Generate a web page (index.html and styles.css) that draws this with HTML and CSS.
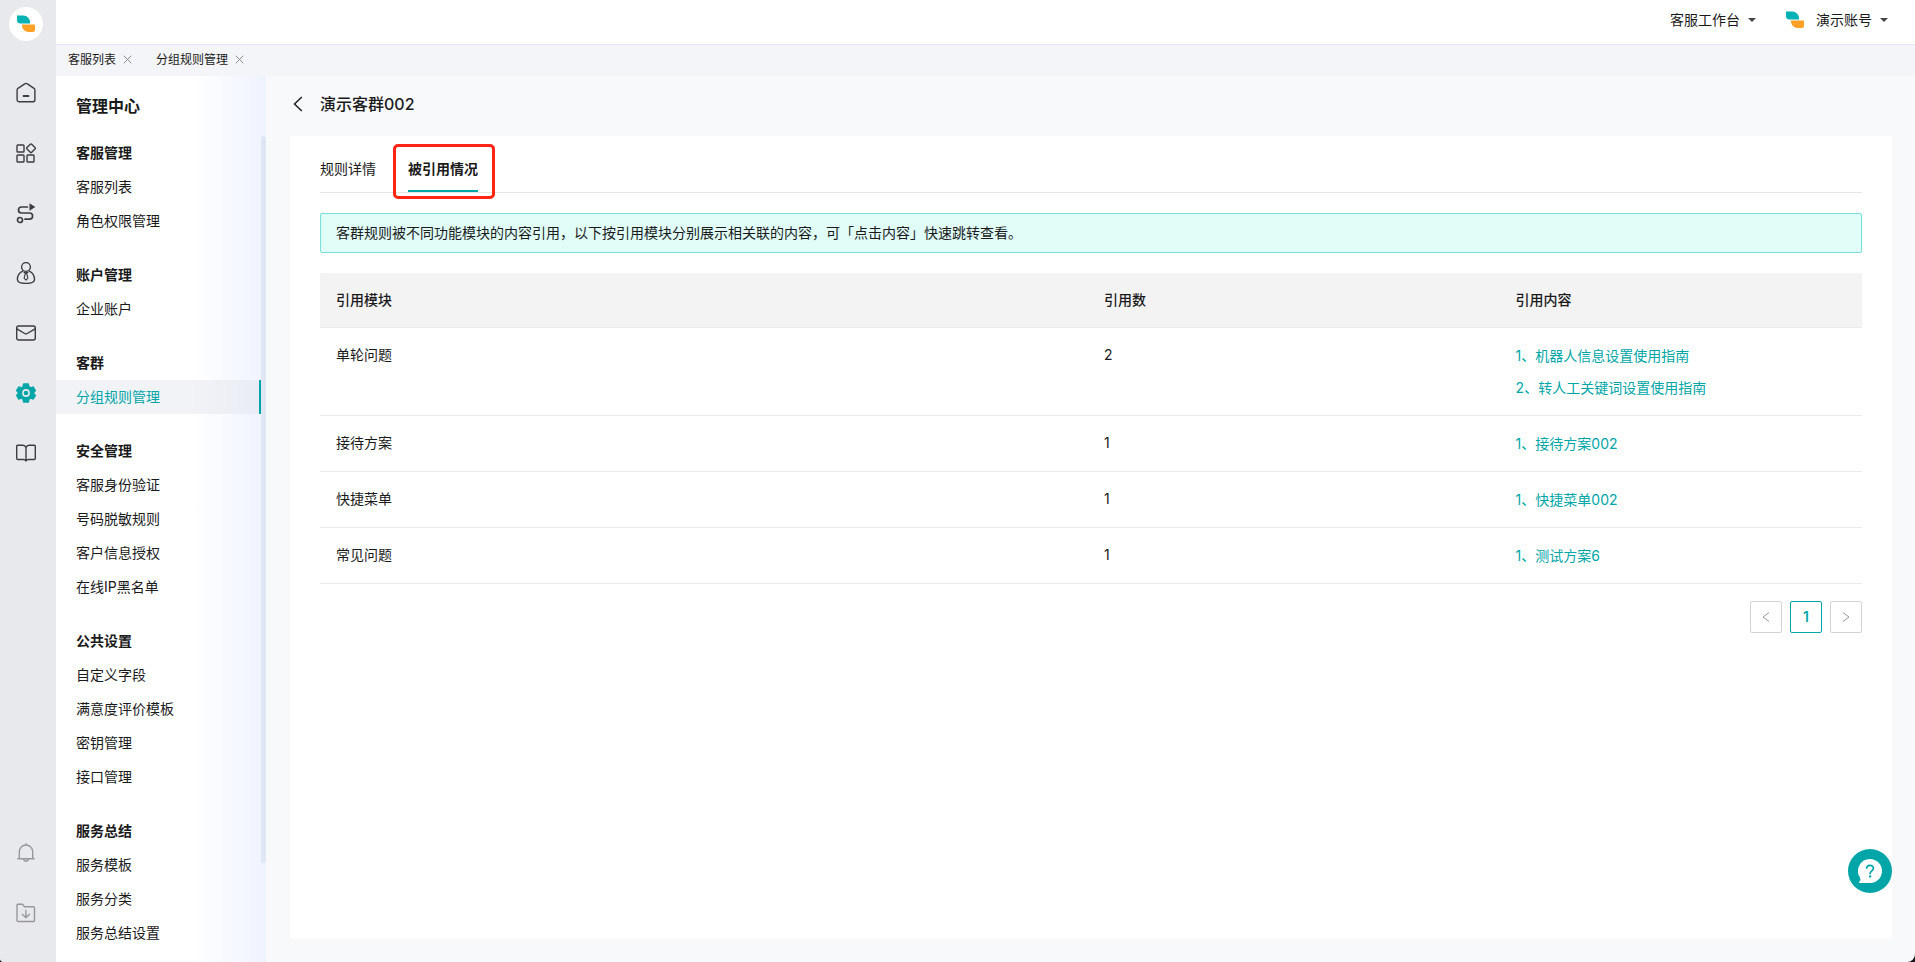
FILE: index.html
```html
<!DOCTYPE html>
<html lang="zh-CN">
<head>
<meta charset="utf-8">
<title>分组规则管理</title>
<link rel="stylesheet" href="styles.css">
</head>
<body>
<svg class="defs" aria-hidden="true">
  <symbol id="brand" viewBox="0 0 18 18">
    <path fill="#00b2b4" d="M0 .5h6.500a7 7 0 0 1 6.500 6.500v1.500H3.500A3.500 3.500 0 0 1 0 5z"/>
    <path fill="#ffa126" d="M5 9.500h13v5.500a2 2 0 0 1-2 2h-4.500A6.500 6.500 0 0 1 5 10.500z"/>
  </symbol>
</svg>
<div class="app">
  <nav class="rail" aria-label="主导航">
    <a class="rail-logo" href="#" aria-label="首页标志"><svg class="brand"><use href="#brand"/></svg></a>
    <a class="rail-item" href="#" aria-label="首页">
      <svg viewBox="0 0 20 20"><path d="M1.100 7.200c0-.8.3-1.400.9-1.900L8.700.8c.8-.5 1.900-.5 2.700 0l6.600 4.500c.6.5.9 1.100.9 1.900v9.500a2.100 2.100 0 0 1-2.100 2.100H3.200a2.100 2.100 0 0 1-2.100-2.100z"/><path d="M7.500 13h5" stroke-width="1.800"/></svg>
    </a>
    <a class="rail-item" href="#" aria-label="应用">
      <svg viewBox="0 0 20 20"><rect x="1" y="2" width="7" height="7" rx=".8"/><rect x="1" y="12" width="7" height="7" rx=".8"/><rect x="11" y="12" width="7" height="7" rx=".8"/><path d="M14.300 1.300a1 1 0 0 1 1.400 0l3.300 3.300a1 1 0 0 1 0 1.400l-3.300 3.300a1 1 0 0 1-1.400 0L11 6a1 1 0 0 1 0-1.400z"/></svg>
    </a>
    <a class="rail-item" href="#" aria-label="流程">
      <svg viewBox="0 0 20 20"><path stroke-width="1.700" d="M11.500 4H5.500a3 3 0 0 0 0 6h8a3 3 0 0 1 0 6.200H9"/><circle cx="4" cy="17" r="2.500" stroke-width="1.700"/><path class="solid" d="M13.500.3 19.300 4l-5.800 3.700z"/></svg>
    </a>
    <a class="rail-item" href="#" aria-label="客户">
      <svg viewBox="0 0 20 22"><circle cx="10" cy="5" r="4.400"/><path d="M6.800 9.200C3.500 10.700 1.400 14 1.400 17.500c0 2.600 3.600 3.900 8.600 3.900s8.500-1.300 8.500-3.900c0-3.500-2.100-6.800-5.300-8.300M8.200 10.500h3.600"/><path stroke-width="1.100" d="m9.300 11.500-1.200 4.700 1.900 2 1.900-2-1.200-4.700z"/></svg>
    </a>
    <a class="rail-item" href="#" aria-label="消息">
      <svg viewBox="0 0 20 20"><rect x=".7" y="3" width="18.600" height="14" rx="2"/><path d="m.9 5.800 7.800 4.700c.8.500 1.700.5 2.500 0L19.100 5.800"/></svg>
    </a>
    <a class="rail-item rail-active" href="#" aria-label="设置">
      <svg viewBox="0 0 20 20"><path class="gear" d="M7.700 1h4.600l.7 2.900 1.600.9 2.700-.8 2 3.600-2 2.400 2 2.400-2 3.600-2.700-.8-1.600.9-.7 2.900H7.700L7 16.100l-1.600-.9-2.700.8-2-3.600 2-2.400-2-2.400 2-3.600 2.700.8L7 3.900z"/><circle class="gear-hole" cx="10" cy="10" r="3.900"/><circle class="gear-dot" cx="10" cy="10" r="2.300"/></svg>
    </a>
    <a class="rail-item" href="#" aria-label="知识库">
      <svg viewBox="0 0 20 20"><path d="M10 4.500C9.400 3 8.500 2.200 7 2.200H1.700a1 1 0 0 0-1 1v12.300a1 1 0 0 0 1 1h5.800c1.300 0 2.100.5 2.500 1.500.4-1 1.200-1.500 2.500-1.500h5.800a1 1 0 0 0 1-1V3.200a1 1 0 0 0-1-1H13c-1.500 0-2.400.8-3 2.300zM10 4.500V18"/></svg>
    </a>
    <span class="rail-space"></span>
    <a class="rail-item rail-muted" href="#" aria-label="通知">
      <svg viewBox="0 0 20 20"><path d="M3.300 15.500V8.700a6.700 6.700 0 0 1 13.400 0v6.800M1.800 15.800h16.400M7.500 16.300a2.600 2.600 0 0 0 5 0M10 .6V2"/></svg>
    </a>
    <a class="rail-item rail-muted" href="#" aria-label="下载">
      <svg viewBox="0 0 20 20"><path d="M1 2.200a1 1 0 0 1 1-1h4.500l2 2.500h9a1 1 0 0 1 1 1v12.800a1 1 0 0 1-1 1H2a1 1 0 0 1-1-1zM9.900 7.500v7M6.300 11.300l3.600 3.500 3.600-3.500"/></svg>
    </a>
  </nav>

  <div class="shell">
    <header class="topbar">
      <button class="menu-button" type="button">客服工作台<span class="caret"></span></button>
      <button class="menu-button" type="button"><svg class="brand brand-account"><use href="#brand"/></svg>演示账号<span class="caret"></span></button>
    </header>
    <div class="page-tabs">
      <div class="page-tab"><a href="#">客服列表</a><button class="close" type="button" aria-label="关闭客服列表"><svg viewBox="0 0 9 9"><path d="m.7.7 7.600 7.600M8.300.7.7 8.300"/></svg></button></div>
      <div class="page-tab"><a href="#">分组规则管理</a><button class="close" type="button" aria-label="关闭分组规则管理"><svg viewBox="0 0 9 9"><path d="m.7.7 7.600 7.600M8.300.7.7 8.300"/></svg></button></div>
    </div>
    <div class="body">
      <aside class="side">
        <h2 class="side-title">管理中心</h2>
        <div class="side-scroll">
          <div class="side-list">
            <section class="side-group"><h3>客服管理</h3><a href="#">客服列表</a><a href="#">角色权限管理</a></section>
            <section class="side-group"><h3>账户管理</h3><a href="#">企业账户</a></section>
            <section class="side-group"><h3>客群</h3><a class="current" href="#">分组规则管理</a></section>
            <section class="side-group"><h3>安全管理</h3><a href="#">客服身份验证</a><a href="#">号码脱敏规则</a><a href="#">客户信息授权</a><a href="#">在线IP黑名单</a></section>
            <section class="side-group"><h3>公共设置</h3><a href="#">自定义字段</a><a href="#">满意度评价模板</a><a href="#">密钥管理</a><a href="#">接口管理</a></section>
            <section class="side-group"><h3>服务总结</h3><a href="#">服务模板</a><a href="#">服务分类</a><a href="#">服务总结设置</a></section>
          </div>
          <div class="side-track"><div class="side-thumb"></div></div>
        </div>
      </aside>

      <main class="main">
        <div class="page-head">
          <button class="back" type="button" aria-label="返回"><svg viewBox="0 0 10 16"><path d="M8.800 1 1.500 8l7.300 7"/></svg></button>
          <h1>演示客群002</h1>
        </div>
        <div class="card">
          <div class="tabs" role="tablist">
            <button class="tab" type="button" role="tab" aria-selected="false">规则详情</button>
            <button class="tab tab-on" type="button" role="tab" aria-selected="true">被引用情况</button>
          </div>
          <p class="notice">客群规则被不同功能模块的内容引用，以下按引用模块分别展示相关联的内容，可「点击内容」快速跳转查看。</p>
          <table class="refs">
            <thead><tr><th class="col-module">引用模块</th><th class="col-count">引用数</th><th>引用内容</th></tr></thead>
            <tbody>
              <tr><td>单轮问题</td><td>2</td><td class="links"><a href="#">1、机器人信息设置使用指南</a><a href="#">2、转人工关键词设置使用指南</a></td></tr>
              <tr><td>接待方案</td><td>1</td><td class="links"><a href="#">1、接待方案002</a></td></tr>
              <tr><td>快捷菜单</td><td>1</td><td class="links"><a href="#">1、快捷菜单002</a></td></tr>
              <tr><td>常见问题</td><td>1</td><td class="links"><a href="#">1、测试方案6</a></td></tr>
            </tbody>
          </table>
          <div class="pager">
            <button class="page" type="button" aria-label="上一页"><svg viewBox="0 0 8 10"><path d="M7 .5 1 5l6 4.500"/></svg></button>
            <button class="page page-on" type="button">1</button>
            <button class="page" type="button" aria-label="下一页"><svg viewBox="0 0 8 10"><path d="m1 .5 6 4.500-6 4.500"/></svg></button>
          </div>
        </div>
      </main>
    </div>
  </div>
  <button class="help" type="button" aria-label="帮助">
    <svg viewBox="0 0 24 24"><path fill="#fff" d="M12 0a12 12 0 0 1 0 24H1c-.5-1 1.300-2.200 1.700-3.200-.5-.8-1-1.300-.6-2A12 12 0 0 1 12 0z"/><path fill="none" stroke="#00a6a7" stroke-width="1.700" d="M8.600 9.800c0-4.500 6.800-4.500 6.800-.4 0 2.400-3.200 2.600-3.300 5.100v.7"/><circle fill="#00a6a7" cx="12.100" cy="17.400" r="1.200"/></svg>
  </button>
</div>
</body>
</html>
```

FILE: styles.css
```css
* { box-sizing: border-box; }

html { background: #1c1418; }

body {
  margin: 0;
  color: #1a1a1a;
  font-family: Inter, "Noto Sans CJK SC", sans-serif;
  font-size: 14px;
  line-height: 22px;
}

h1, h2, h3, p { margin: 0; }

a { color: inherit; text-decoration: none; }

button {
  margin: 0;
  padding: 0;
  border: 0;
  background: none;
  color: inherit;
  font: inherit;
  cursor: pointer;
}

svg { display: block; }

.defs { position: absolute; width: 0; height: 0; }

.app {
  position: relative;
  display: flex;
  height: 100vh;
  overflow: hidden;
  border-radius: 0 0 8px 4px;
  background: #f8f9fb;
}

/* Icon rail */
.rail {
  display: flex;
  flex-direction: column;
  align-items: center;
  flex: none;
  width: 56px;
  padding: 7px 4px 19px 0;
  background: #e8e9ed;
}

.rail-logo {
  display: grid;
  place-items: center;
  flex: none;
  width: 34px;
  height: 34px;
  margin-bottom: 22px;
  border-radius: 50%;
  background: #fff;
}

.brand { width: 18px; height: 18px; }

.rail-item {
  display: grid;
  place-items: center;
  flex: none;
  width: 100%;
  height: 60px;
  color: #3c3d40;
}

.rail-item svg {
  width: 20px;
  height: 22px;
  fill: none;
  stroke: currentColor;
  stroke-width: 1.4;
  stroke-linecap: round;
  stroke-linejoin: round;
}

.rail-item .solid { fill: currentColor; stroke: none; }
.rail-active { color: #00a6a7; }
.rail-active .gear { fill: currentColor; }
.rail-active .gear-hole { fill: #e8e9ed; stroke: none; }
.rail-active .gear-dot { fill: currentColor; stroke: none; }
.rail-muted { color: #97989c; }
.rail-space { flex: 1; }

/* Top area */
.shell {
  display: flex;
  flex-direction: column;
  flex: 1;
  min-width: 0;
}

.topbar {
  display: flex;
  justify-content: flex-end;
  align-items: center;
  gap: 30px;
  flex: none;
  height: 45px;
  padding: 0 27px 5px 0;
  border-bottom: 1px solid #e6e9f5;
  background: #fff;
}

.menu-button { display: flex; align-items: center; }

.brand-account { margin-right: 12px; }

.caret {
  margin-left: 8px;
  border: 4px solid transparent;
  border-top-color: #444;
  border-bottom: 0;
}

.page-tabs {
  display: flex;
  gap: 24px;
  flex: none;
  height: 31px;
  padding: 0 12px 2px;
  background: #f4f5f8;
  font-size: 12px;
}

.page-tab { display: flex; align-items: center; gap: 7px; }

.close svg {
  width: 9px;
  height: 9px;
  stroke: #8c8c8c;
  fill: none;
}

.body { display: flex; flex: 1; min-height: 0; }

/* Management menu */
.side {
  display: flex;
  flex-direction: column;
  flex: none;
  width: 210px;
  background: linear-gradient(90deg, #fff 65%, #eff3ff);
}

.side-title {
  flex: none;
  padding-left: 20px;
  font-size: 16px;
  font-weight: 700;
  line-height: 60px;
}

.side-scroll { display: flex; flex: 1; min-height: 0; }

.side-list { flex: 1; overflow: hidden; }

.side-group { margin-bottom: 20px; }

.side-group h3,
.side-group a {
  display: block;
  padding-left: 20px;
  font-size: 14px;
  line-height: 34px;
}

.side-group h3 { font-weight: 700; }

.side-group .current {
  border-right: 2px solid #00a6a7;
  background: rgba(220, 224, 232, 0.38);
  color: #00a6a7;
}

.side-track { flex: none; width: 5px; }

.side-thumb {
  height: 88%;
  border-radius: 3px;
  background: #e1e6f5;
}

/* Content */
.main {
  display: flex;
  flex-direction: column;
  flex: 1;
  min-width: 0;
  padding: 0 23px 23px 24px;
}

.page-head {
  display: flex;
  align-items: center;
  gap: 17px;
  flex: none;
  height: 60px;
  padding: 0 3px 4px;
}

.back svg {
  width: 10px;
  height: 16px;
  fill: none;
  stroke: #222;
  stroke-width: 1.5;
}

.page-head h1 { font-size: 16px; font-weight: 500; }

.card { flex: 1; padding: 9px 30px; background: #fff; }

.tabs {
  display: flex;
  margin-bottom: 20px;
  border-bottom: 1px solid #e6e6e6;
}

.tab {
  position: relative;
  margin-right: 32px;
  padding: 13px 0 12px;
}

.tab-on { font-weight: 700; }

.tab-on::before {
  position: absolute;
  inset: -1px -17px -7px -15px;
  border: 3px solid #ff2414;
  border-radius: 5px;
  content: "";
}

.tab-on::after {
  position: absolute;
  right: 0;
  bottom: 0;
  left: 0;
  height: 2px;
  background: #00a6a7;
  content: "";
}

.notice {
  margin-bottom: 20px;
  padding: 8px 15px;
  border: 1px solid #78dfd9;
  border-radius: 2px;
  background: #e0fdf8;
}

.refs {
  width: 100%;
  border-collapse: separate;
  border-spacing: 0;
  table-layout: fixed;
}

.refs th,
.refs td {
  padding: 16px;
  border-bottom: 1px solid #ebebeb;
  text-align: left;
  vertical-align: top;
}

.refs th { background: #f3f3f3; font-weight: 500; }
.refs th:first-child { border-top-left-radius: 2px; }
.refs th:last-child { border-top-right-radius: 2px; }
.col-module { width: 49.8%; }
.col-count { width: 26.7%; }

.refs .links { padding: 12px 16px 11px; }

.links a {
  display: block;
  color: #00a6a7;
  line-height: 32px;
}

.pager {
  display: flex;
  justify-content: flex-end;
  gap: 8px;
  margin-top: 17px;
}

.page {
  display: grid;
  place-items: center;
  width: 32px;
  height: 32px;
  border: 1px solid #d4d4d4;
  border-radius: 2px;
}

.page svg {
  width: 8px;
  height: 10px;
  fill: none;
  stroke: #999;
}

.page-on {
  border-color: #00a6a7;
  color: #00a6a7;
  font-weight: 600;
}

.help {
  position: absolute;
  right: 23px;
  bottom: 69px;
  display: grid;
  place-items: center;
  width: 44px;
  height: 44px;
  border-radius: 50%;
  background: #00a6a7;
}

.help svg { width: 24px; height: 24px; }
```
